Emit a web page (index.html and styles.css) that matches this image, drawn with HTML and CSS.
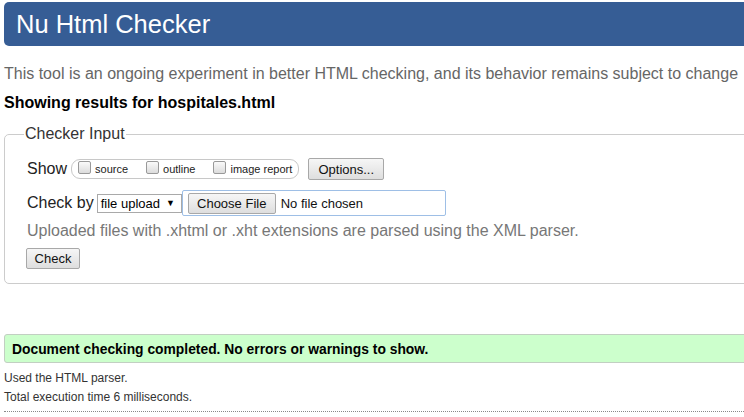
FILE: index.html
```html
<!DOCTYPE html>
<html>
<head>
<meta charset="utf-8">
<title>Nu Html Checker</title>
<link rel="stylesheet" href="styles.css">
</head>
<body>
<div class="page">
  <header class="banner"><h1>Nu Html Checker</h1></header>
  <p class="intro">This tool is an ongoing experiment in better HTML checking, and its behavior remains subject to change</p>
  <p class="showing">Showing results for hospitales.html</p>
  <fieldset class="input">
    <legend>Checker Input</legend>
    <div class="row">
      <span class="lbl">Show</span>
      <span class="pill">
        <label class="opt"><span class="cb"></span>source</label>
        <label class="opt"><span class="cb"></span>outline</label>
        <label class="opt"><span class="cb"></span>image report</label>
      </span>
      <span class="btn options">Options...</span>
    </div>
    <div class="row row2">
      <span class="lbl">Check by</span>
      <span class="select">file upload <span class="arrow">▼</span></span>
      <span class="file"><span class="btn choose">Choose File</span><span class="nofile">No file chosen</span></span>
    </div>
    <p class="note">Uploaded files with .xhtml or .xht extensions are parsed using the XML parser.</p>
    <span class="btn check">Check</span>
  </fieldset>
  <div class="success">Document checking completed. No errors or warnings to show.</div>
  <div class="metas">
    <p class="meta">Used the HTML parser.</p>
    <p class="meta">Total execution time 6 milliseconds.</p>
  </div>
  <div class="dots"></div>
</div>
</body>
</html>
```

FILE: styles.css
```css
html { overflow: hidden; }
body {
  margin: 0;
  font-family: "Liberation Sans", Arial, sans-serif;
  color: #000;
  background: #fff;
}
.page {
  width: 820px;
  padding: 2px 0 0 4px;
}
.banner {
  background: #365d95;
  border-radius: 5px;
  height: 44px;
  display: flex;
  align-items: center;
  padding-left: 12px;
}
.banner h1 {
  margin: 0;
  color: #fff;
  font-weight: normal;
  font-size: 25.5px;
}
.intro {
  margin: 0;
  padding-top: 18px;
  font-size: 16px;
  color: #666;
  line-height: 20px;
}
.showing {
  margin: 0;
  padding-top: 10px;
  font-size: 16px;
  font-weight: bold;
  line-height: 18px;
}
.input {
  margin: 13px 0 0 0;
  border: 1px solid #ccc;
  border-radius: 5px;
  padding: 15px 0 14px 22px;
  min-width: 0;
}
.input legend {
  font-size: 16px;
  color: #333;
  padding: 0 1px;
  margin-left: -3px;
}
.row {
  display: flex;
  align-items: center;
  height: 22px;
}
.lbl {
  font-size: 16px;
  color: #222;
}
.pill {
  display: inline-flex;
  align-items: center;
  margin-left: 4px;
  height: 18px;
  border: 1px solid #c8c8c8;
  border-radius: 9px;
  padding: 0 6px 0 6px;
  gap: 18px;
}
.opt {
  display: inline-flex;
  align-items: center;
  font-size: 11px;
  color: #222;
}
.cb {
  width: 11px;
  height: 11px;
  border: 1px solid #999;
  border-radius: 2px;
  background: linear-gradient(#fafafa, #dcdcdc);
  margin-right: 4px;
  margin-top: -3px;
}
.btn {
  display: inline-flex;
  align-items: center;
  justify-content: center;
  border: 1px solid #a8a8a8;
  border-radius: 2px;
  background: linear-gradient(#f6f6f6, #dedede);
  font-size: 13px;
  color: #111;
}
.options {
  margin-left: 9px;
  width: 74px;
  height: 20px;
}
.row2 {
  margin-top: 10px;
  height: 26px;
}
.select {
  margin-left: 3px;
  display: inline-flex;
  align-items: center;
  height: 19px;
  width: 85px;
  border: 1px solid #a9a9a9;
  font-size: 13px;
  padding-left: 3px;
  box-sizing: border-box;
}
.arrow {
  font-size: 9px;
  margin-left: 6px;
}
.file {
  margin-left: 0;
  display: inline-flex;
  align-items: center;
  width: 264px;
  height: 26px;
  box-sizing: border-box;
  border: 1px solid #9ebfe6;
  border-radius: 2px;
  padding-left: 5px;
}
.choose {
  width: 86px;
  height: 19px;
  font-size: 13px;
}
.nofile {
  font-size: 13px;
  margin-left: 5px;
  color: #111;
}
.note {
  margin: 5px 0 0 0;
  font-size: 16px;
  color: #777;
  line-height: 20px;
}
.check {
  margin-top: 7px;
  margin-left: -1px;
  width: 52px;
  height: 19px;
}
.success {
  margin-top: 50px;
  background: #ccffcc;
  border: 1px solid #c2cfc2;
  border-radius: 3px;
  height: 27px;
  display: flex;
  align-items: center;
  padding-left: 7px;
  font-size: 13.85px;
  font-weight: bold;
}
.metas {
  padding-top: 6px;
}
.meta {
  margin: 0;
  font-size: 12px;
  color: #333;
  line-height: 19px;
}
.dots {
  margin-top: 4px;
  border-top: 1px dotted #888;
}
```
